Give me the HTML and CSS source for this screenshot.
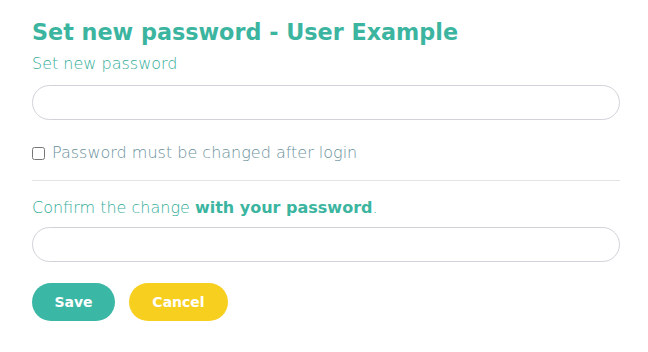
FILE: index.html
```html
<!DOCTYPE html>
<html>
<head>
<meta charset="utf-8">
<link rel="stylesheet" href="styles.css">
</head>
<body>
<div class="page">
  <h1 class="title">Set new password - User Example</h1>
  <label class="label" for="pw1">Set new password</label>
  <input class="field first" id="pw1" type="password">
  <label class="check">
    <input type="checkbox" class="box">
    <span>Password must be changed after login</span>
  </label>
  <hr class="sep">
  <label class="label confirm" for="pw2">Confirm the change <b>with your password</b>.</label>
  <input class="field second" id="pw2" type="password">
  <div class="actions">
    <button class="btn save">Save</button>
    <button class="btn cancel">Cancel</button>
  </div>
</div>
</body>
</html>
```
FILE: styles.css
```css
html, body { margin: 0; padding: 0; background: #fff; }
body { font-family: "DejaVu Sans", "Open Sans", sans-serif; }
.page {
  display: flex;
  flex-direction: column;
  padding: 18px 28px 0 32px;
  width: 588px;
}
.title {
  margin: 0;
  font-size: 22.3px;
  font-weight: 700;
  color: #3bb5a0;
  line-height: 28px;
}
.label {
  margin-top: 8px;
  font-size: 16px;
  font-weight: 200;
  color: #33ad99;
  line-height: 20px;
}
.label b { font-weight: 700; color: #3bb5a0; }
.field {
  margin-top: 9px;
  height: 35px;
  box-sizing: border-box;
  border: 1px solid #d2d3da;
  border-radius: 18px;
  outline: none;
  padding: 0 16px;
  background: #fff;
}
.field.first { margin-top: 11px; }
.check {
  display: flex;
  align-items: center;
  margin-top: 23px;
  font-size: 16px;
  font-weight: 200;
  color: #6b929b;
  line-height: 20px;
}
.box {
  margin: 0 7px 0 0;
  width: 13px;
  height: 13px;
}
.sep {
  margin: 17px 0 0 0;
  border: 0;
  border-top: 1px solid #e3e3e3;
  height: 0;
}
.confirm { margin-top: 17px; }
.actions {
  display: flex;
  gap: 14px;
  margin-top: 21px;
}
.btn {
  height: 38px;
  border: 0;
  border-radius: 19px;
  color: #fff;
  font-family: "DejaVu Sans", sans-serif;
  font-weight: 700;
  font-size: 14px;
}
.save { width: 83px; background: #3ab7a5; }
.cancel { width: 99px; background: #f7cf1f; }
```
